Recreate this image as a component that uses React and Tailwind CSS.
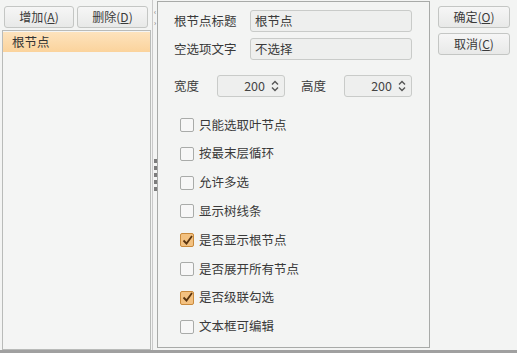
import React from 'react';

const font = { fontFamily: '"Noto Sans CJK SC", "Noto Sans", sans-serif' };

const Btn = ({ children, className = '' }) => (
  <div
    className={`flex items-center justify-center h-[22px] rounded-[3px] border border-[#c4c6c4] bg-gradient-to-b from-[#f6f6f6] to-[#e8e9e8] text-[12px] text-[#3a3a3a] ${className}`}
  >
    {children}
  </div>
);

const Field = ({ label, value }) => (
  <div className="flex items-center h-[22px]">
    <span className="w-[76px] text-[12.5px] text-[#3a3a3a]">{label}</span>
    <div className="flex-1 h-[22px] flex items-center px-[4px] rounded-[3px] border border-[#c9cbc9] bg-[#eeefee] text-[12.5px] text-[#3a3a3a]">
      {value}
    </div>
  </div>
);

const Spin = ({ value }) => (
  <div className="w-[68px] h-[22px] flex items-center justify-end pr-[4px] rounded-[3px] border border-[#c9cbc9] bg-[#eeefee] text-[12.5px] text-[#444]">
    <span>{value}</span>
    <svg width="10" height="14" viewBox="0 0 10 14" className="ml-[5px]">
      <path d="M2 5.5 L5 2.5 L8 5.5" fill="none" stroke="#555" strokeWidth="1.4" />
      <path d="M2 8.5 L5 11.5 L8 8.5" fill="none" stroke="#555" strokeWidth="1.4" />
    </svg>
  </div>
);

const Check = ({ label, checked }) => (
  <div className="flex items-center h-[20px]">
    {checked ? (
      <div className="w-[14px] h-[14px] rounded-[2px] border border-[#c98a3c] bg-[#f3c180] flex items-center justify-center">
        <svg width="11" height="11" viewBox="0 0 11 11">
          <path d="M1.5 5.5 L4.5 8.5 L10 1" fill="none" stroke="#5a3510" strokeWidth="1.8" />
        </svg>
      </div>
    ) : (
      <div className="w-[14px] h-[14px] rounded-[2px] border border-[#a9aba9] bg-[#f7f7f7]" />
    )}
    <span className="ml-[5px] text-[12.5px] text-[#3a3a3a]">{label}</span>
  </div>
);

const checks = [
  ['只能选取叶节点', false],
  ['按最末层循环', false],
  ['允许多选', false],
  ['显示树线条', false],
  ['是否显示根节点', true],
  ['是否展开所有节点', false],
  ['是否级联勾选', true],
  ['文本框可编辑', false],
];

export default function App() {
  return (
    <div
      className="w-[517px] h-[353px] bg-[#f3f4f3] flex border-b-[3px] border-[#a0a0a0] overflow-hidden"
      style={font}
    >
      {/* left column */}
      <div className="w-[152px] flex flex-col">
        <div className="flex gap-[3px] px-[4px] pt-[6px] pb-[2px]">
          <Btn className="w-[71px]">增加(<u>A</u>)</Btn>
          <Btn className="w-[72px]">删除(<u>D</u>)</Btn>
        </div>
        <div className="flex-1 ml-[2px] mr-[1px] border border-[#b9bbb9] bg-[#f4f5f4] pt-[1px]">
          <div className="h-[20px] flex items-center pl-[9px] bg-gradient-to-b from-[#fde3bd] to-[#fbd39c] text-[12.5px] text-[#333]">
            根节点
          </div>
        </div>
      </div>

      {/* splitter */}
      <div className="w-[5px] flex flex-col items-center border-l border-[#c9c9c9]">
        <div className="mt-[8px] text-[7px] leading-[7px] text-[#666]">‹</div>
        <div className="mt-[4px] text-[7px] leading-[7px] text-[#666]">›</div>
        <div className="mt-[133px] flex flex-col gap-[3px]">
          {[0, 1, 2, 3, 4].map((i) => (
            <div key={i} className="w-[3px] h-[4px] bg-[#7c7c7c]" />
          ))}
        </div>
      </div>

      {/* middle panel */}
      <div className="w-[273px] mt-[1px] mb-[2px] border border-[#a8aaa8] flex flex-col pl-[16px] pr-[17px] pt-[8px]">
        <div className="flex flex-col gap-[6px]">
          <Field label="根节点标题" value="根节点" />
          <Field label="空选项文字" value="不选择" />
        </div>
        <div className="flex items-center mt-[15px]">
          <span className="w-[43px] text-[12.5px] text-[#3a3a3a]">宽度</span>
          <Spin value="200" />
          <span className="ml-[16px] w-[43px] text-[12.5px] text-[#3a3a3a]">高度</span>
          <Spin value="200" />
        </div>
        <div className="flex flex-col gap-[8.8px] mt-[18px] pl-[6px]">
          {checks.map(([l, c]) => (
            <Check key={l} label={l} checked={c} />
          ))}
        </div>
      </div>

      {/* right buttons */}
      <div className="flex-1 flex flex-col gap-[5px] pl-[8px] pr-[7px] pt-[6px]">
        <Btn className="w-[72px]">确定(<u>O</u>)</Btn>
        <Btn className="w-[72px]">取消(<u>C</u>)</Btn>
      </div>
    </div>
  );
}
